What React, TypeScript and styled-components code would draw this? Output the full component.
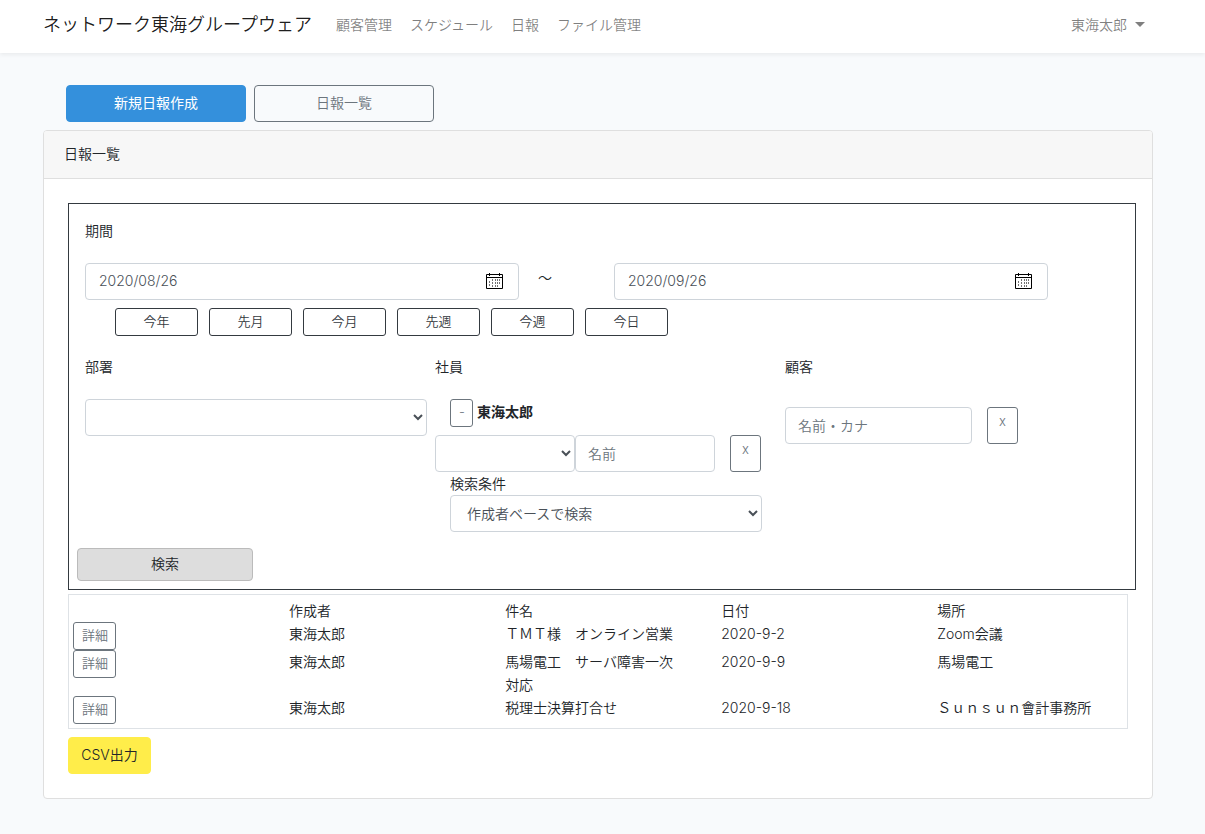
import React, { useState } from "react";
import styled, { createGlobalStyle, css } from "styled-components";

const GlobalStyle = createGlobalStyle`
  *, *::before, *::after { box-sizing: border-box; }
  body {
    margin: 0;
    background: #f8fafc;
    color: #212529;
    font-family: Inter, "Noto Sans CJK JP", sans-serif;
    font-size: 14px;
    font-weight: 350;
    line-height: 23px;
  }
  button, input, select { font: inherit; margin: 0; }
`;

const Header = styled.header`
  display: flex;
  align-items: center;
  padding: 5px 52px 9px 43px;
  background: #fff;
  box-shadow: 0 2px 4px rgba(0, 0, 0, 0.06);
`;

const Brand = styled.a`
  margin-right: 15px;
  color: rgba(0, 0, 0, 0.9);
  font-size: 18px;
  text-decoration: none;
  white-space: nowrap;
`;

const Nav = styled.nav`
  display: flex;
  flex: 1;
`;

const NavLink = styled.a`
  padding: 8px 9px;
  color: rgba(0, 0, 0, 0.5);
  text-decoration: none;
  white-space: nowrap;
`;

const UserMenu = styled.button`
  display: flex;
  align-items: center;
  gap: 8px;
  padding: 8px;
  border: 0;
  background: none;
  color: rgba(0, 0, 0, 0.5);
  cursor: pointer;
`;

const Caret = styled.span`
  border: 5px solid transparent;
  border-top-color: currentColor;
  border-bottom: 0;
`;

const Main = styled.main`
  padding: 32px 52px 32px 43px;
`;

const Tabs = styled.div`
  display: flex;
  gap: 8px;
  padding-left: 23px;
  margin-bottom: 8px;
`;

type Tone = "primary" | "secondary" | "dark" | "search" | "warning";

const tones = {
  primary: css`background: #3490dc; border-color: #3490dc; color: #fff; font-weight: 400;`,
  secondary: css`background: transparent; border-color: #6c757d; color: #6c757d;`,
  dark: css`background: transparent; border-color: #343a40; color: #343a40;`,
  search: css`background: #ddd; border-color: #bbb; color: #212529;`,
  warning: css`background: #ffed4a; border-color: #ffed4a; color: #212529;`,
};

const Button = styled.button<{ $tone: Tone; $width?: number }>`
  width: ${(p) => (p.$width ? `${p.$width}px` : "auto")};
  padding: 6px 12px;
  border: 1px solid;
  border-radius: 4px;
  white-space: nowrap;
  cursor: pointer;
  ${(p) => tones[p.$tone]}
`;

const TabButton = styled(Button)`
  height: 37px;
  padding: 5px 12px 7px;
`;

const SmallButton = styled(Button)`
  height: 28px;
  padding: 2px 8px 4px;
  border-radius: 3px;
  font-size: 13px;
  line-height: 20px;
`;

const ClearButton = styled(SmallButton)`
  height: 37px;
  margin-left: 15px;
  padding-bottom: 12px;
`;

const SearchButton = styled(Button)`
  height: 33px;
  margin: 16px 8px 8px;
  padding: 3px 12px 5px;
`;

const Card = styled.section`
  border: 1px solid #dfdfdf;
  border-radius: 4px;
  background: #fff;
`;

const CardHeader = styled.h1`
  margin: 0;
  padding: 11px 20px 13px;
  border-bottom: 1px solid #dfdfdf;
  border-radius: 3px 3px 0 0;
  background: #f7f7f7;
  font-size: 14px;
  font-weight: 350;
`;

const CardBody = styled.div`
  padding: 24px 16px 24px 24px;
`;

const SearchForm = styled.form`
  border: 1px solid #343a40;
`;

const Fields = styled.div`
  padding: 15px 0 0 16px;
`;

const GroupLabel = styled.label`
  display: block;
  margin-bottom: 21px;
`;

const DateRange = styled.div`
  display: grid;
  grid-template-columns: 434fr 95fr 434fr 87fr;
`;

const Tilde = styled.span`
  padding: 3px 0 0 19px;
`;

const control = css`
  height: 37px;
  padding: 6px 12px;
  border: 1px solid #ced4da;
  border-radius: 4px;
  background: #fff;
  color: #495057;
`;

const DateBox = styled.div`
  ${control}
  display: flex;
  align-items: center;
  padding: 5px 12px 7px;
`;

const DateInput = styled.input`
  flex: 1;
  min-width: 0;
  padding: 0 1px;
  border: 0;
  outline: 0;
  background: none;
  color: inherit;
`;

const CalendarButton = styled.button`
  display: flex;
  padding: 0 2px;
  border: 0;
  background: none;
  color: #000;
  cursor: pointer;
`;

const QuickRanges = styled.div`
  display: flex;
  gap: 11px;
  margin: 8px 0 19px;
  padding-left: 30px;
`;

const Criteria = styled.div`
  display: grid;
  grid-template-columns: repeat(3, 1fr);
`;

const TextInput = styled.input`
  ${control}
  min-width: 0;
  width: ${(p) => p.width}px;
  &::placeholder { color: #6c757d; opacity: 1; }
`;

const Select = styled.select`
  ${control}
  width: 100%;
`;

const SelectSlot = styled.div<{ $width: number }>`
  width: ${(p) => p.$width}px;
`;

const Inline = styled.div`
  display: flex;
`;

const CustomerLine = styled(Inline)`
  padding-top: 8px;
`;

const Selected = styled.div`
  display: flex;
  gap: 4px;
  margin-bottom: 8px;
  padding-left: 15px;
`;

const SelectedName = styled.strong`
  padding-top: 1px;
  font-weight: 700;
`;

const Condition = styled.div`
  padding-left: 15px;
`;

const ConditionLabel = styled.label`
  display: block;
`;

const Results = styled.div`
  margin: 4px 8px 8px 0;
  padding: 4px 0 4px 4px;
  border: 1px solid #dee2e6;
`;

const Table = styled.table`
  width: 100%;
  table-layout: fixed;
  border-collapse: collapse;
`;

const Column = styled.col`
  width: 20.5%;
`;

const Th = styled.th`
  padding: 0;
  font-weight: 350;
  text-align: left;
`;

const Td = styled.td<{ $wide?: boolean }>`
  padding: 0 ${(p) => (p.$wide ? 0 : 36)}px 0 0;
  vertical-align: top;
`;

const DetailButton = styled(SmallButton)`
  display: block;
`;

const CalendarIcon = () => (
  <svg width="19" height="18" viewBox="0 0 19 18" fill="none" stroke="currentColor" aria-hidden="true">
    <path d="M1.5 2.5h16v14h-16z" />
    <path d="M1 5.5h17M4.5 1v3M14.5 1v3" />
    <path
      d="M4.5 9v6M7.5 7v8M10.5 7v8M12.5 7v8M14.5 7v6"
      strokeDasharray="2 1"
      strokeOpacity=".55"
    />
  </svg>
);

const ranges = ["今年", "先月", "今月", "先週", "今週", "今日"];

const reports = [
  { author: "東海太郎", subject: "ＴＭＴ様　オンライン営業", date: "2020-9-2", place: "Zoom会議" },
  { author: "東海太郎", subject: "馬場電工　サーバ障害一次対応", date: "2020-9-9", place: "馬場電工" },
  { author: "東海太郎", subject: "税理士決算打合せ", date: "2020-9-18", place: "Ｓｕｎｓｕｎ會計事務所" },
];

function DateField({ id, label, initial }: { id: string; label: string; initial: string }) {
  const [value, setValue] = useState(initial);
  return (
    <DateBox>
      <DateInput id={id} aria-label={label} value={value} onChange={(e) => setValue(e.target.value)} />
      <CalendarButton type="button" aria-label="カレンダーを開く">
        <CalendarIcon />
      </CalendarButton>
    </DateBox>
  );
}

export default function App() {
  return (
    <>
      <GlobalStyle />
      <Header>
        <Brand href="#">ネットワーク東海グループウェア</Brand>
        <Nav>
          <NavLink href="#customers">顧客管理</NavLink>
          <NavLink href="#schedule">スケジュール</NavLink>
          <NavLink href="#reports">日報</NavLink>
          <NavLink href="#files">ファイル管理</NavLink>
        </Nav>
        <UserMenu type="button">
          東海太郎
          <Caret />
        </UserMenu>
      </Header>
      <Main>
        <Tabs>
          <TabButton type="button" $tone="primary" $width={180}>新規日報作成</TabButton>
          <TabButton type="button" $tone="secondary" $width={180}>日報一覧</TabButton>
        </Tabs>
        <Card>
          <CardHeader>日報一覧</CardHeader>
          <CardBody>
            <SearchForm onSubmit={(e) => e.preventDefault()}>
              <Fields>
                <GroupLabel htmlFor="date-from">期間</GroupLabel>
                <DateRange>
                  <DateField id="date-from" label="開始日" initial="2020/08/26" />
                  <Tilde>～</Tilde>
                  <DateField id="date-to" label="終了日" initial="2020/09/26" />
                </DateRange>
                <QuickRanges>
                  {ranges.map((r) => (
                    <SmallButton key={r} type="button" $tone="dark" $width={83}>{r}</SmallButton>
                  ))}
                </QuickRanges>
                <Criteria>
                  <div>
                    <GroupLabel htmlFor="department">部署</GroupLabel>
                    <SelectSlot $width={342}>
                      <Select id="department"><option></option></Select>
                    </SelectSlot>
                  </div>
                  <div>
                    <GroupLabel htmlFor="employee">社員</GroupLabel>
                    <Selected>
                      <SmallButton type="button" $tone="secondary" $width={23}>-</SmallButton>
                      <SelectedName>東海太郎</SelectedName>
                    </Selected>
                    <Inline>
                      <SelectSlot $width={140}>
                        <Select aria-label="社員の部署"><option></option></Select>
                      </SelectSlot>
                      <TextInput id="employee" width={140} placeholder="名前" />
                      <ClearButton type="button" $tone="secondary" $width={31}>x</ClearButton>
                    </Inline>
                    <Condition>
                      <ConditionLabel htmlFor="condition">検索条件</ConditionLabel>
                      <SelectSlot $width={312}>
                        <Select id="condition"><option>作成者ベースで検索</option></Select>
                      </SelectSlot>
                    </Condition>
                  </div>
                  <div>
                    <GroupLabel htmlFor="customer">顧客</GroupLabel>
                    <CustomerLine>
                      <TextInput id="customer" width={187} placeholder="名前・カナ" />
                      <ClearButton type="button" $tone="secondary" $width={31}>x</ClearButton>
                    </CustomerLine>
                  </div>
                </Criteria>
              </Fields>
              <SearchButton type="submit" $tone="search" $width={176}>検索</SearchButton>
            </SearchForm>
            <Results>
              <Table>
                <colgroup>
                  <Column /><Column /><Column /><Column /><col />
                </colgroup>
                <thead>
                  <tr>
                    <Th aria-label="操作" />
                    <Th>作成者</Th>
                    <Th>件名</Th>
                    <Th>日付</Th>
                    <Th>場所</Th>
                  </tr>
                </thead>
                <tbody>
                  {reports.map((r) => (
                    <tr key={r.date}>
                      <Td><DetailButton type="button" $tone="secondary" $width={43}>詳細</DetailButton></Td>
                      <Td>{r.author}</Td>
                      <Td>{r.subject}</Td>
                      <Td>{r.date}</Td>
                      <Td $wide>{r.place}</Td>
                    </tr>
                  ))}
                </tbody>
              </Table>
            </Results>
            <TabButton type="button" $tone="warning" $width={83}>CSV出力</TabButton>
          </CardBody>
        </Card>
      </Main>
    </>
  );
}
